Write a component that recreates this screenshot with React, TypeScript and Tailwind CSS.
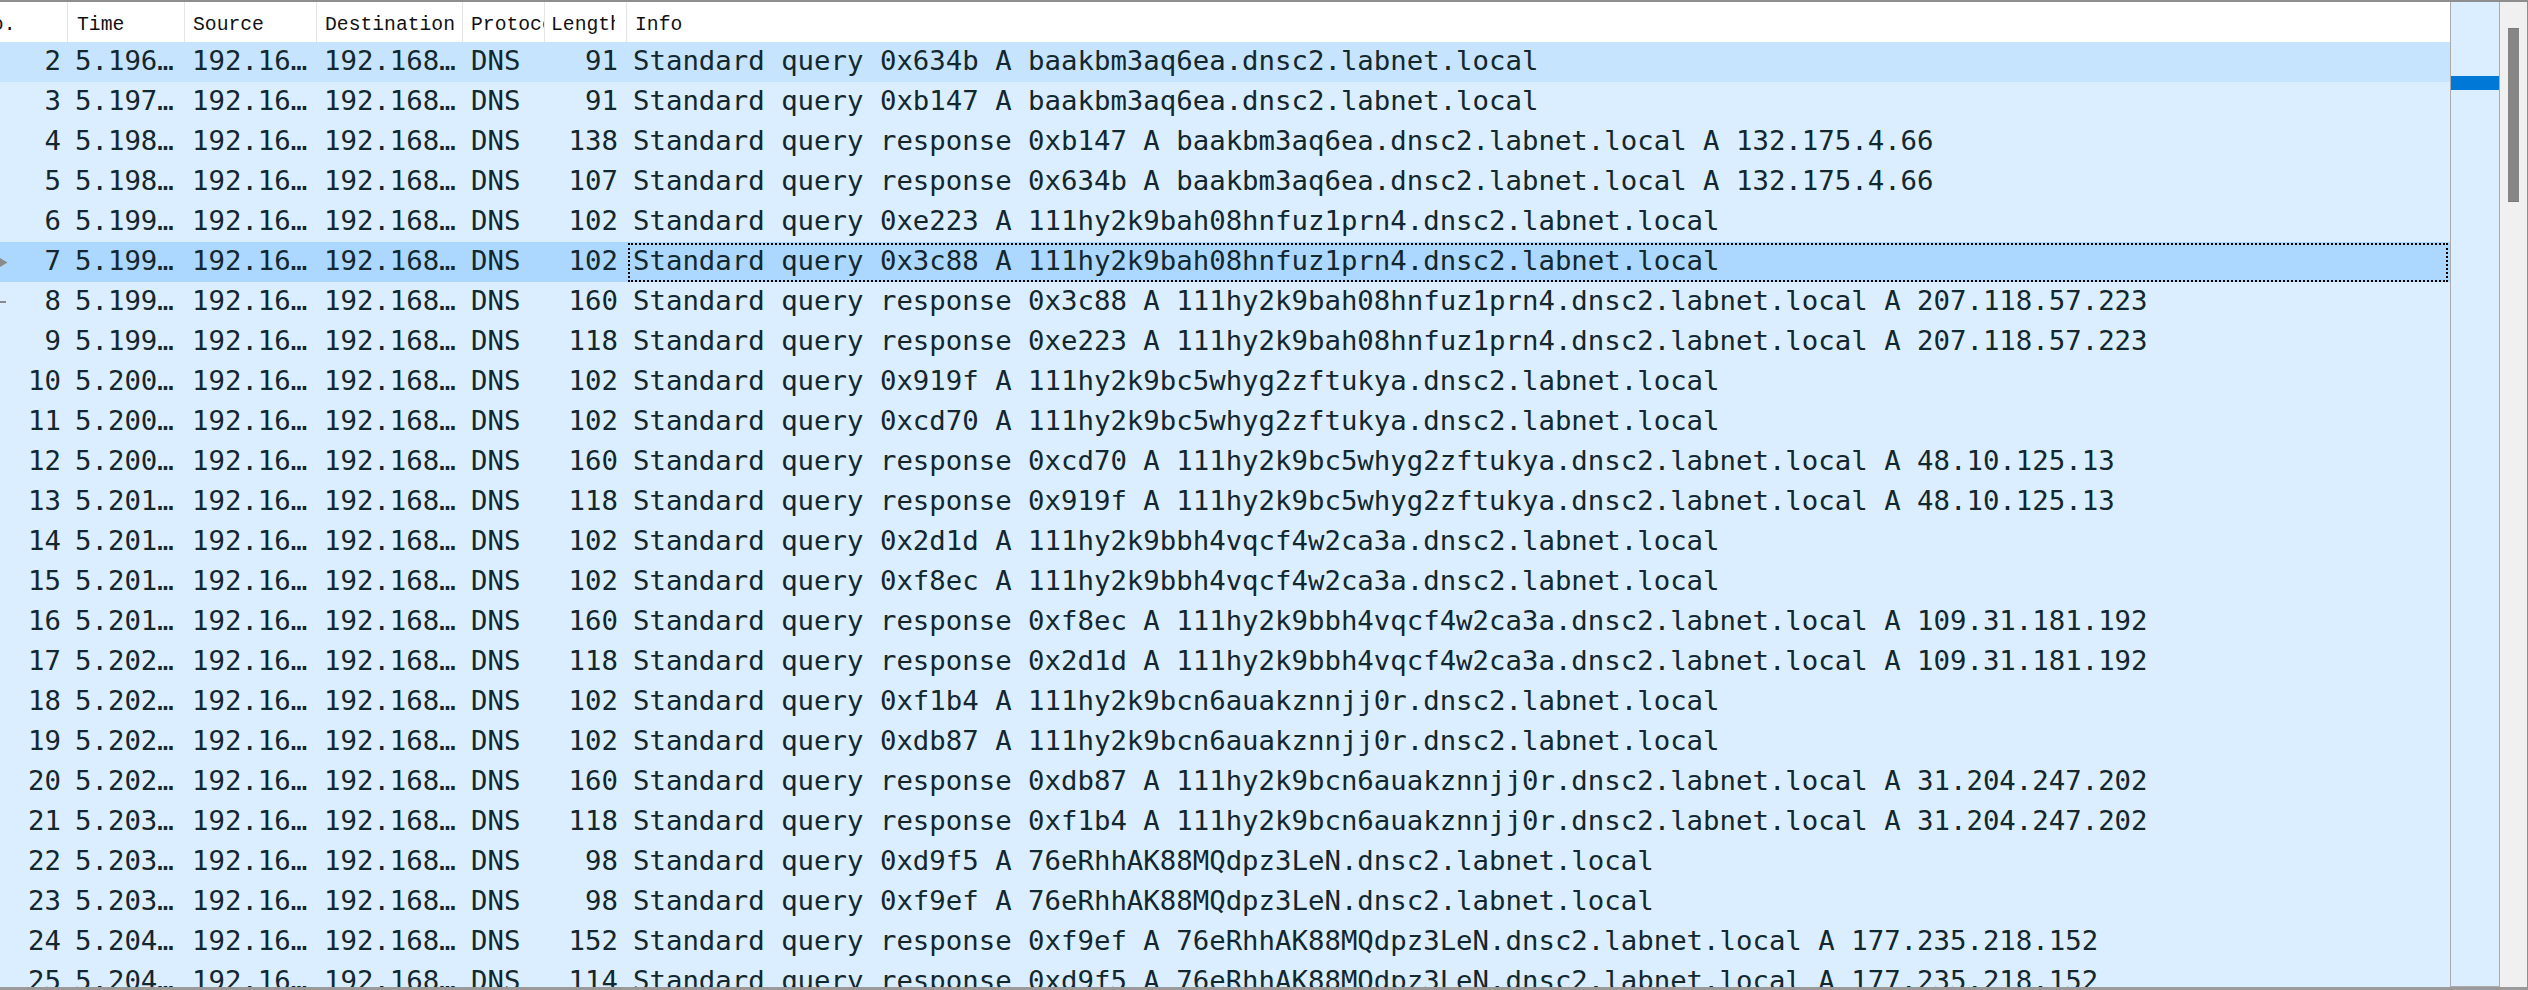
import React from "react";

type Row = { no: number; time: string; len: number; info: string };

const rows: Row[] = [
  { no: 2, time: "5.196…", len: 91, info: "Standard query 0x634b A baakbm3aq6ea.dnsc2.labnet.local" },
  { no: 3, time: "5.197…", len: 91, info: "Standard query 0xb147 A baakbm3aq6ea.dnsc2.labnet.local" },
  { no: 4, time: "5.198…", len: 138, info: "Standard query response 0xb147 A baakbm3aq6ea.dnsc2.labnet.local A 132.175.4.66" },
  { no: 5, time: "5.198…", len: 107, info: "Standard query response 0x634b A baakbm3aq6ea.dnsc2.labnet.local A 132.175.4.66" },
  { no: 6, time: "5.199…", len: 102, info: "Standard query 0xe223 A 111hy2k9bah08hnfuz1prn4.dnsc2.labnet.local" },
  { no: 7, time: "5.199…", len: 102, info: "Standard query 0x3c88 A 111hy2k9bah08hnfuz1prn4.dnsc2.labnet.local" },
  { no: 8, time: "5.199…", len: 160, info: "Standard query response 0x3c88 A 111hy2k9bah08hnfuz1prn4.dnsc2.labnet.local A 207.118.57.223" },
  { no: 9, time: "5.199…", len: 118, info: "Standard query response 0xe223 A 111hy2k9bah08hnfuz1prn4.dnsc2.labnet.local A 207.118.57.223" },
  { no: 10, time: "5.200…", len: 102, info: "Standard query 0x919f A 111hy2k9bc5whyg2zftukya.dnsc2.labnet.local" },
  { no: 11, time: "5.200…", len: 102, info: "Standard query 0xcd70 A 111hy2k9bc5whyg2zftukya.dnsc2.labnet.local" },
  { no: 12, time: "5.200…", len: 160, info: "Standard query response 0xcd70 A 111hy2k9bc5whyg2zftukya.dnsc2.labnet.local A 48.10.125.13" },
  { no: 13, time: "5.201…", len: 118, info: "Standard query response 0x919f A 111hy2k9bc5whyg2zftukya.dnsc2.labnet.local A 48.10.125.13" },
  { no: 14, time: "5.201…", len: 102, info: "Standard query 0x2d1d A 111hy2k9bbh4vqcf4w2ca3a.dnsc2.labnet.local" },
  { no: 15, time: "5.201…", len: 102, info: "Standard query 0xf8ec A 111hy2k9bbh4vqcf4w2ca3a.dnsc2.labnet.local" },
  { no: 16, time: "5.201…", len: 160, info: "Standard query response 0xf8ec A 111hy2k9bbh4vqcf4w2ca3a.dnsc2.labnet.local A 109.31.181.192" },
  { no: 17, time: "5.202…", len: 118, info: "Standard query response 0x2d1d A 111hy2k9bbh4vqcf4w2ca3a.dnsc2.labnet.local A 109.31.181.192" },
  { no: 18, time: "5.202…", len: 102, info: "Standard query 0xf1b4 A 111hy2k9bcn6auakznnjj0r.dnsc2.labnet.local" },
  { no: 19, time: "5.202…", len: 102, info: "Standard query 0xdb87 A 111hy2k9bcn6auakznnjj0r.dnsc2.labnet.local" },
  { no: 20, time: "5.202…", len: 160, info: "Standard query response 0xdb87 A 111hy2k9bcn6auakznnjj0r.dnsc2.labnet.local A 31.204.247.202" },
  { no: 21, time: "5.203…", len: 118, info: "Standard query response 0xf1b4 A 111hy2k9bcn6auakznnjj0r.dnsc2.labnet.local A 31.204.247.202" },
  { no: 22, time: "5.203…", len: 98, info: "Standard query 0xd9f5 A 76eRhhAK88MQdpz3LeN.dnsc2.labnet.local" },
  { no: 23, time: "5.203…", len: 98, info: "Standard query 0xf9ef A 76eRhhAK88MQdpz3LeN.dnsc2.labnet.local" },
  { no: 24, time: "5.204…", len: 152, info: "Standard query response 0xf9ef A 76eRhhAK88MQdpz3LeN.dnsc2.labnet.local A 177.235.218.152" },
  { no: 25, time: "5.204…", len: 114, info: "Standard query response 0xd9f5 A 76eRhhAK88MQdpz3LeN.dnsc2.labnet.local A 177.235.218.152" },
];

export default function App() {
  return (
    <div className="w-[2528px] h-[990px] overflow-hidden bg-white flex flex-col border-t-2 border-t-[#8e8e8e] border-r border-r-[#8e8e8e] border-b-[3px] border-b-[#9a9a9a]">
      <div className="flex flex-1 min-h-0">
        {/* packet list */}
        <div className="w-[2450px] shrink-0 flex flex-col overflow-hidden">
          {/* header */}
          <div
            className="flex h-[40px] shrink-0 bg-white text-[#111111] text-[19.7px] leading-[40px]"
            style={{ fontFamily: '"Liberation Mono", monospace' }}
          >
            <div className="w-[68px] shrink-0 h-full overflow-hidden whitespace-nowrap pt-[3px] border-r border-[#e5e5e5]">
              <span className="ml-[-20px]">No.</span>
            </div>
            <div className="w-[117px] shrink-0 h-full overflow-hidden whitespace-nowrap pt-[3px] pl-[9px] border-r border-[#e5e5e5]">Time</div>
            <div className="w-[132px] shrink-0 h-full overflow-hidden whitespace-nowrap pt-[3px] pl-[8px] border-r border-[#e5e5e5]">Source</div>
            <div className="w-[146px] shrink-0 h-full overflow-hidden whitespace-nowrap pt-[3px] pl-[8px] border-r border-[#e5e5e5]">Destination</div>
            <div className="w-[82px] shrink-0 h-full overflow-hidden whitespace-nowrap pt-[3px] pl-[8px] border-r border-[#e5e5e5]">Protocol</div>
            <div className="w-[82px] shrink-0 h-full whitespace-nowrap pt-[3px] pl-[6px] border-r border-[#e5e5e5]">
              <div className="w-[64px] overflow-hidden">Length</div>
            </div>
            <div className="flex-1 min-w-0 h-full overflow-hidden whitespace-nowrap pt-[3px] pl-[8px]">Info</div>
          </div>
          {/* rows */}
          <div
            className="flex flex-col text-[27.35px] leading-[37px] text-[#12272e]"
            style={{ fontFamily: '"DejaVu Sans Mono", monospace' }}
          >
            {rows.map((r) => {
              const bg = r.no === 7 ? "bg-[#acd8ff]" : r.no === 2 ? "bg-[#c6e4fd]" : "bg-[#daeeff]";
              return (
                <div key={r.no} className={`flex h-[40px] shrink-0 whitespace-nowrap ${bg}`}>
                  <div className="relative w-[68px] shrink-0 pr-[7px] text-right overflow-hidden">
                    {r.no === 7 && (
                      <svg className="absolute left-0 top-[16px]" width="8" height="9" viewBox="0 0 8 9">
                        <path d="M0 0 L7.5 4.5 L0 9 Z" fill="#8a8a8a" />
                      </svg>
                    )}
                    {r.no === 8 && <div className="absolute left-0 top-[19px] w-[6px] h-[1.5px] bg-[#8a8a8a]" />}
                    {r.no}
                  </div>
                  <div className="w-[117px] shrink-0 pl-[7px] overflow-hidden">{r.time}</div>
                  <div className="w-[132px] shrink-0 pl-[7px] overflow-hidden">192.16…</div>
                  <div className="w-[146px] shrink-0 pl-[7px] overflow-hidden">192.168…</div>
                  <div className="w-[82px] shrink-0 pl-[8px] overflow-hidden">DNS</div>
                  <div className="w-[82px] shrink-0 pr-[9px] text-right overflow-hidden">{r.len}</div>
                  <div className="relative flex-1 min-w-0 pl-[6px] overflow-hidden">
                    {r.no === 7 && (
                      <div className="absolute left-[1px] right-[2px] top-[1px] bottom-0 border-2 border-dotted border-black" />
                    )}
                    {r.info}
                  </div>
                </div>
              );
            })}
          </div>
        </div>
        {/* minimap */}
        <div className="w-[50px] shrink-0 bg-[#daeeff] border-x border-b border-[#ababab] flex flex-col">
          <div className="mt-[74px] h-[14px] bg-[#0078d7]" />
        </div>
        {/* scrollbar */}
        <div className="w-[27px] shrink-0 bg-[#f0f0f0] flex flex-col">
          <div className="mt-[26px] ml-[8px] w-[11px] h-[174px] bg-[#868686] border-y border-[#7a7a7a]" />
        </div>
      </div>
    </div>
  );
}
